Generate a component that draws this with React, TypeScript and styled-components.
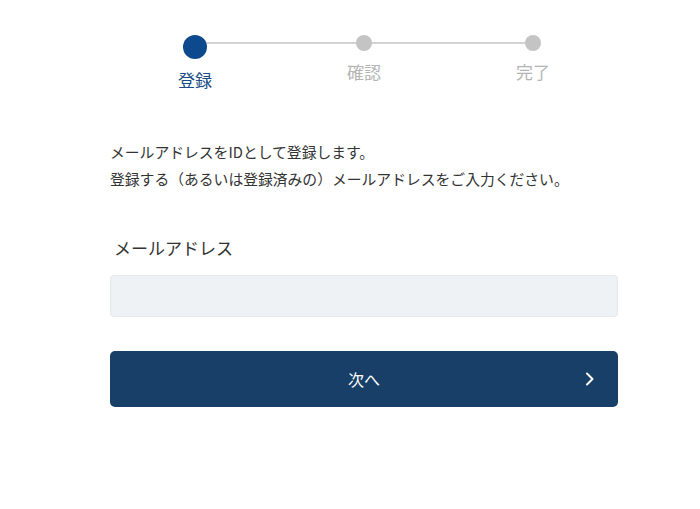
import React from "react";
import styled, { createGlobalStyle } from "styled-components";

const GlobalStyle = createGlobalStyle`
  html, body { margin: 0; padding: 0; background: #ffffff; }
  body {
    font-family: "Noto Sans CJK JP", "Noto Sans", sans-serif;
    color: #333333;
    -webkit-font-smoothing: antialiased;
  }
  * { box-sizing: border-box; }
`;

const Page = styled.main`
  width: 700px;
  min-height: 509px;
  padding: 35px 0 0 110px;
`;

const Content = styled.div`
  width: 508px;
  display: flex;
  flex-direction: column;
`;

const Stepper = styled.ol`
  position: relative;
  list-style: none;
  margin: 0 auto;
  padding: 0;
  width: 398px;
  display: flex;
  justify-content: space-between;
  align-items: flex-start;

  &::before {
    content: "";
    position: absolute;
    left: 30px;
    right: 30px;
    top: 7px;
    height: 2px;
    background: #d3d3d3;
  }
`;

const Step = styled.li`
  position: relative;
  width: 60px;
  display: flex;
  flex-direction: column;
  align-items: center;
`;

const Dot = styled.span<{ $active?: boolean }>`
  display: block;
  width: ${(p) => (p.$active ? 24 : 16)}px;
  height: ${(p) => (p.$active ? 24 : 16)}px;
  border-radius: 50%;
  background: ${(p) => (p.$active ? "#0d4a8d" : "#c4c4c4")};
`;

const StepLabel = styled.span<{ $active?: boolean }>`
  margin-top: 9px;
  font-size: 17px;
  line-height: 24px;
  color: ${(p) => (p.$active ? "#1a4d85" : "#b4b4b4")};
  white-space: nowrap;
`;

const Intro = styled.p`
  margin: 46px 0 0;
  font-size: 14.8px;
  line-height: 27px;
  color: #333333;
`;

const FieldLabel = styled.label`
  display: block;
  margin: 43px 0 0 4px;
  font-size: 17px;
  line-height: 26px;
  color: #333333;
`;

const Input = styled.input`
  display: block;
  margin-top: 14px;
  width: 508px;
  height: 42px;
  border: 1px solid #e4e8ec;
  border-radius: 4px;
  background: #eff2f5;
  font-family: inherit;
  font-size: 15px;
  padding: 0 12px;
  outline: none;
`;

const NextButton = styled.button`
  margin-top: 34px;
  width: 508px;
  height: 56px;
  border: none;
  border-radius: 5px;
  background: #173f68;
  color: #ffffff;
  font-family: inherit;
  font-size: 16px;
  display: grid;
  grid-template-columns: 1fr auto 1fr;
  align-items: center;
  padding: 0 22px 0 22px;
  cursor: pointer;
`;

const ButtonText = styled.span`
  grid-column: 2;
  line-height: 22px;
`;

const Chevron = styled.svg`
  grid-column: 3;
  justify-self: end;
  display: block;
`;

export default function App() {
  return (
    <>
      <GlobalStyle />
      <Page>
        <Content>
          <Stepper>
            <Step>
              <Dot $active />
              <StepLabel $active>登録</StepLabel>
            </Step>
            <Step>
              <Dot />
              <StepLabel>確認</StepLabel>
            </Step>
            <Step>
              <Dot />
              <StepLabel>完了</StepLabel>
            </Step>
          </Stepper>
          <Intro>
            メールアドレスをIDとして登録します。
            <br />
            登録する（あるいは登録済みの）メールアドレスをご入力ください。
          </Intro>
          <FieldLabel htmlFor="email">メールアドレス</FieldLabel>
          <Input id="email" type="email" />
          <NextButton type="button">
            <ButtonText>次へ</ButtonText>
            <Chevron width="12" height="16" viewBox="0 0 12 16" fill="none">
              <path d="M3 2.5 L8.5 8 L3 13.5" stroke="#ffffff" strokeWidth="2" strokeLinecap="round" strokeLinejoin="round" />
            </Chevron>
          </NextButton>
        </Content>
      </Page>
    </>
  );
}
